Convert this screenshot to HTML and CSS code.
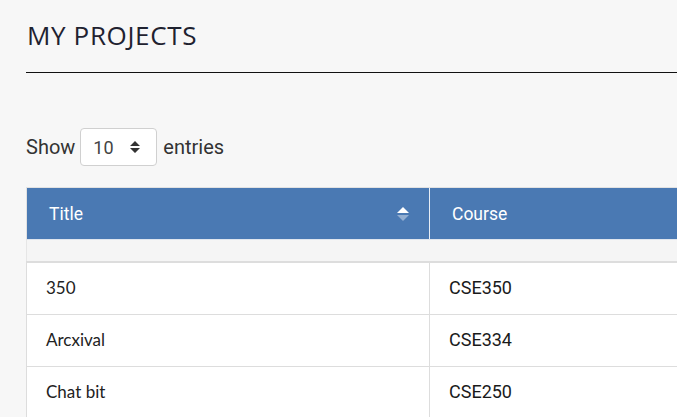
FILE: index.html
```html
<!DOCTYPE html>
<html>
<head>
<meta charset="utf-8">
<link rel="stylesheet" href="styles.css">
</head>
<body>
<div class="page">
  <h1 class="title">MY PROJECTS</h1>
  <div class="rule"></div>
  <div class="length">
    <span>Show</span>
    <div class="select"><span class="val">10</span>
      <svg class="updown" width="10" height="12" viewBox="0 0 10 12"><path d="M5 0 L10 5 H0 Z M0 7 H10 L5 12 Z" fill="#333"/></svg>
    </div>
    <span>entries</span>
  </div>
  <div class="table">
    <div class="thead">
      <div class="th th-title"><span>Title</span>
        <svg class="sort" width="12" height="14" viewBox="0 0 12 14"><path d="M6 0 L12 6 H0 Z" fill="#fff"/><path d="M0 8 H12 L6 14 Z" fill="#fff" fill-opacity="0.4"/></svg>
      </div>
      <div class="th th-course">Course</div>
    </div>
    <div class="spacer"></div>
    <div class="tbody">
      <div class="row"><div class="td">350</div><div class="td course">CSE350</div></div>
      <div class="row"><div class="td">Arcxival</div><div class="td course">CSE334</div></div>
      <div class="row"><div class="td">Chat bit</div><div class="td course">CSE250</div></div>
    </div>
  </div>
</div>
</body>
</html>
```

FILE: styles.css
```css
html, body {
  margin: 0;
  padding: 0;
  background: #f7f7f7;
  overflow: hidden;
}
.page {
  padding-left: 26px;
  width: 1100px;
}
.title {
  font-family: "Open Sans", sans-serif;
  font-weight: 400;
  font-size: 26px;
  letter-spacing: 0.65px;
  line-height: 32px;
  color: #1f2230;
  margin: 19px 0 0 1px;
}
.rule {
  height: 1px;
  background: #111;
  margin-top: 21px;
}
.length {
  display: flex;
  align-items: center;
  gap: 5px;
  margin-top: 55px;
  font-family: Roboto, sans-serif;
  font-size: 20px;
  color: #333;
  height: 38px;
}
.select {
  box-sizing: border-box;
  width: 77px;
  height: 38px;
  border: 1px solid #d0d0d0;
  border-radius: 4px;
  background: #fff;
  display: flex;
  align-items: center;
  justify-content: space-between;
  padding: 0 16px 0 12px;
  font-size: 18px;
  color: #444;
  margin-right: 1px;
}
.table {
  margin-top: 21px;
  width: 1000px;
}
.thead {
  display: grid;
  grid-template-columns: 403px 1fr;
  border-top: 1px solid #e2e2e2;
  border-left: 1px solid #e2e2e2;
  border-bottom: 1px solid #dfe5ee;
  background: #4a79b3;
}
.th {
  height: 51px;
  display: flex;
  align-items: center;
  font-family: Roboto, sans-serif;
  font-weight: 400;
  font-size: 17.5px;
  color: #fff;
}
.th-title {
  padding: 0 20px 0 22px;
  justify-content: space-between;
  border-right: 1px solid #e8eef6;
}
.th-course {
  padding-left: 22px;
}
.sort {
  margin-top: 1px;
}
.spacer {
  height: 21px;
  background: #f5f5f5;
  border-left: 1px solid #e6e6e6;
}
.tbody {
  border-top: 2px solid #dddddd;
  border-left: 1px solid #dddddd;
  background: #fff;
}
.row {
  display: grid;
  grid-template-columns: 403px 1fr;
  border-bottom: 1px solid #dddddd;
}
.td {
  box-sizing: border-box;
  height: 51px;
  display: flex;
  align-items: center;
  padding: 0 0 3px 19px;
  font-family: Lato, sans-serif;
  font-size: 17px;
  color: #222;
}
.td:first-child {
  border-right: 1px solid #dddddd;
}
.td.course {
  font-family: Roboto, sans-serif;
  font-size: 18px;
  font-weight: 400;
  color: #1a1a1a;
}
```
